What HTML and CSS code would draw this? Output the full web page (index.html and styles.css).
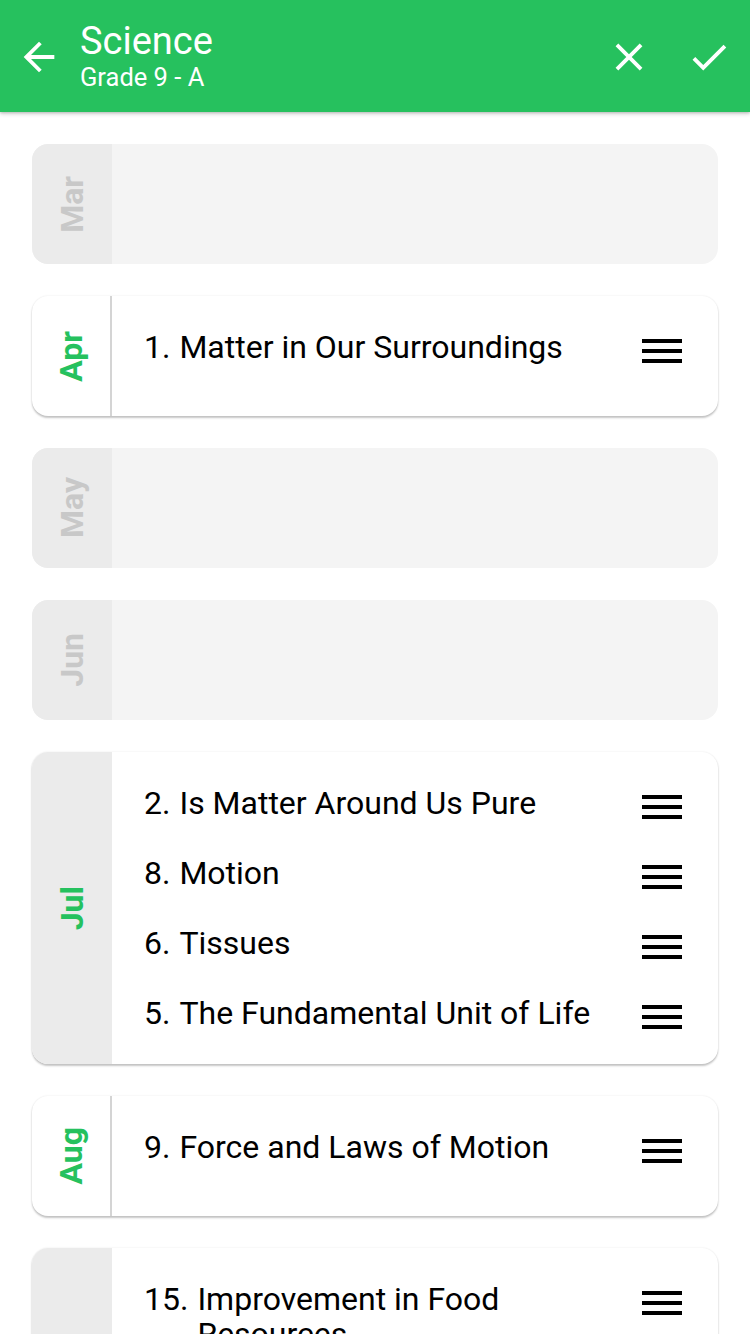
FILE: index.html
```html
<!DOCTYPE html>
<html>
<head>
<meta charset="utf-8">
<link rel="stylesheet" href="styles.css">
</head>
<body>
<header class="appbar">
  <svg class="icon back" viewBox="0 0 24 24"><path d="M20 11H7.83l5.59-5.59L12 4l-8 8 8 8 1.41-1.41L7.83 13H20v-2z" fill="#fff"/></svg>
  <div class="titles">
    <div class="title">Science</div>
    <div class="subtitle">Grade 9 - A</div>
  </div>
  <svg class="icon close" viewBox="0 0 24 24"><path d="M19 6.41L17.59 5 12 10.59 6.41 5 5 6.41 10.59 12 5 17.59 6.41 19 12 13.41 17.59 19 19 17.59 13.41 12z" fill="#fff"/></svg>
  <svg class="icon check" viewBox="0 0 24 24"><path d="M9 16.17L4.83 12l-1.42 1.41L9 19 21 7l-1.41-1.41z" fill="#fff"/></svg>
</header>

<main class="list">
  <section class="card empty">
    <div class="month"><span>Mar</span></div>
    <div class="items"></div>
  </section>

  <section class="card filled bordered">
    <div class="month"><span>Apr</span></div>
    <div class="items">
      <div class="row"><span class="num">1.</span><span class="name">Matter in Our Surroundings</span><span class="drag"><i></i><i></i><i></i></span></div>
    </div>
  </section>

  <section class="card empty">
    <div class="month"><span>May</span></div>
    <div class="items"></div>
  </section>

  <section class="card empty">
    <div class="month"><span>Jun</span></div>
    <div class="items"></div>
  </section>

  <section class="card filled shaded">
    <div class="month"><span>Jul</span></div>
    <div class="items">
      <div class="row"><span class="num">2.</span><span class="name">Is Matter Around Us Pure</span><span class="drag"><i></i><i></i><i></i></span></div>
      <div class="row"><span class="num">8.</span><span class="name">Motion</span><span class="drag"><i></i><i></i><i></i></span></div>
      <div class="row"><span class="num">6.</span><span class="name">Tissues</span><span class="drag"><i></i><i></i><i></i></span></div>
      <div class="row"><span class="num">5.</span><span class="name">The Fundamental Unit of Life</span><span class="drag"><i></i><i></i><i></i></span></div>
    </div>
  </section>

  <section class="card filled bordered">
    <div class="month"><span>Aug</span></div>
    <div class="items">
      <div class="row"><span class="num">9.</span><span class="name">Force and Laws of Motion</span><span class="drag"><i></i><i></i><i></i></span></div>
    </div>
  </section>

  <section class="card filled shaded">
    <div class="month"><span></span></div>
    <div class="items">
      <div class="row"><span class="num">15.</span><span class="name">Improvement in Food Resources</span><span class="drag"><i></i><i></i><i></i></span></div>
    </div>
  </section>
</main>
</body>
</html>
```

FILE: styles.css
```css
* { box-sizing: border-box; }
html, body { margin: 0; padding: 0; }
body {
  width: 750px;
  height: 1334px;
  overflow: hidden;
  background: #fff;
  font-family: Roboto, "Noto Sans", sans-serif;
  color: #000;
}
.appbar {
  height: 112px;
  background: #26c15e;
  display: flex;
  align-items: center;
  padding: 0 18px 0 16px;
  box-shadow: 0 2px 4px rgba(0,0,0,0.18), 0 1px 2px rgba(0,0,0,0.12);
  position: relative;
  z-index: 2;
}
.icon { width: 46px; height: 46px; flex: none; }
.back { margin-right: 18px; margin-top: 2px; }
.titles { flex: 1; color: #fff; display: flex; flex-direction: column; margin-top: 0; }
.title { font-size: 38px; line-height: 42px; }
.subtitle { font-size: 25.5px; line-height: 30px; }
.close { margin-right: 34px; margin-top: 2px; }
.check { margin-top: 2px; }

.list {
  padding: 32px 32px 0 32px;
  display: flex;
  flex-direction: column;
  gap: 32px;
}
.card {
  width: 686px;
  min-height: 120px;
  border-radius: 16px;
  display: flex;
  overflow: hidden;
  flex: none;
}
.card.empty { background: #f4f4f4; }
.card.filled {
  background: #fff;
  box-shadow: 0 2px 2px rgba(0,0,0,0.22), 0 0 2px rgba(0,0,0,0.10);
}
.month {
  width: 80px;
  flex: none;
  display: flex;
  align-items: center;
  justify-content: center;
}
.month span {
  writing-mode: vertical-rl;
  transform: rotate(180deg);
  font-size: 32px;
  font-weight: 700;
}
.empty .month { background: #ebebeb; }
.empty .month span { color: #c8c8c8; }
.filled .month span { color: #25c15e; }
.bordered .month { border-right: 2px solid #d4d4d4; }
.shaded .month { background: #ebebeb; }

.items {
  flex: 1;
  padding: 16px 0;
  display: flex;
  flex-direction: column;
}
.row {
  display: flex;
  align-items: flex-start;
  padding: 0 36px 0 32px;
  min-height: 70px;
  font-size: 32px;
  line-height: 35px;
}
.num { flex: none; margin-top: 18px; margin-right: 9px; }
.name { flex: 1; margin-top: 18px; }
.drag {
  flex: none;
  width: 40px;
  display: flex;
  flex-direction: column;
  gap: 6px;
  margin-top: 27px;
  margin-left: 12px;
}
.drag i {
  display: block;
  height: 4px;
  background: #000;
}
```
